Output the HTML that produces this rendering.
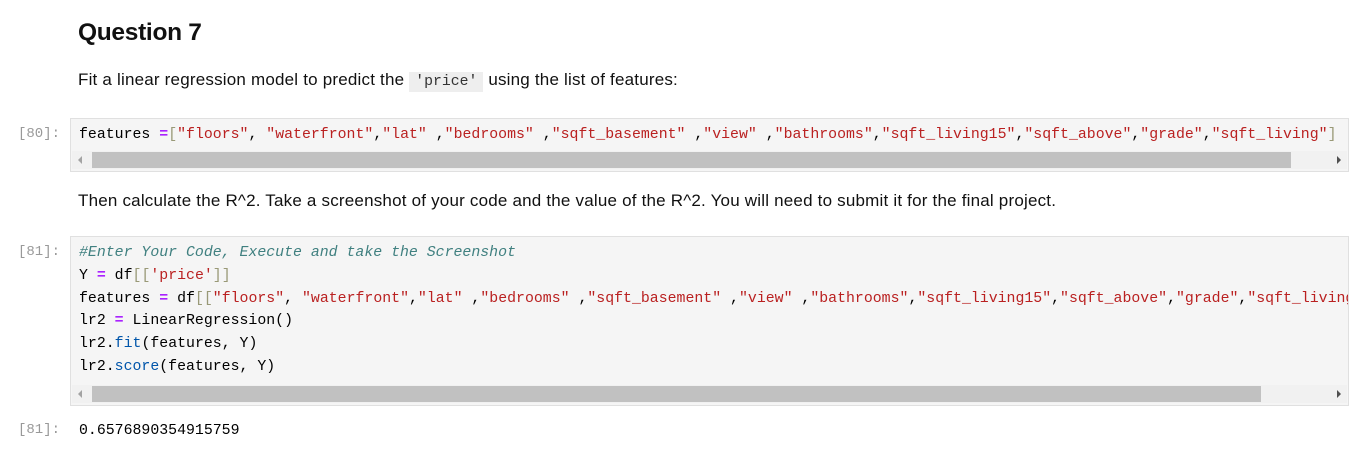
<!DOCTYPE html>
<html><head><meta charset="utf-8"><style>
body{margin:0;background:#fff;width:1357px;height:460px;overflow:hidden;font-family:"Liberation Sans",sans-serif;color:#000;position:relative}
h2{position:absolute;left:78px;top:19px;margin:0;font-size:24.5px;font-weight:bold;color:#111;letter-spacing:-0.3px}
.p{position:absolute;left:78px;font-size:17px;color:#111;letter-spacing:0.2px;white-space:nowrap}
.ic{background:#eee;font-family:"Liberation Mono",monospace;font-size:14.8px;padding:2px 6px;color:#333;letter-spacing:0}
.pr{position:absolute;left:18px;font-family:"Liberation Mono",monospace;font-size:14px;color:#999;white-space:nowrap}
.cell{position:absolute;left:70px;width:1277px;background:#f5f5f5;border:1px solid #e0e0e0;overflow:hidden}
.code{position:absolute;left:8px;font-family:"Liberation Mono",monospace;font-size:14.86px;line-height:22.8px;white-space:pre;color:#000}
.s{color:#ba2121}.o{color:#aa22ff;font-weight:bold}.c{color:#408080;font-style:italic}.f{color:#0055aa}.k{color:#999977}
.sb{position:absolute;left:1px;right:1px;height:18px;background:#f1f1f1}
.th{position:absolute;left:20px;top:1px;height:16px;background:#c1c1c1}
.la{position:absolute;left:6px;top:5px;width:0;height:0;border-top:4px solid transparent;border-bottom:4px solid transparent;border-right:4px solid #a3a3a3}
.ra{position:absolute;right:6px;top:5px;width:0;height:0;border-top:4px solid transparent;border-bottom:4px solid transparent;border-left:4px solid #505050}
</style></head><body>
<h2>Question 7</h2>
<div class="p" style="top:70px">Fit a linear regression model to predict the <span class="ic">'price'</span> using the list of features:</div>
<div class="pr" style="top:126px">[80]:</div>
<div class="cell" style="top:118px;height:52px">
<div class="code" style="top:5px">features <span class="o">=</span><span class="k">[</span><span class="s">"floors"</span>, <span class="s">"waterfront"</span>,<span class="s">"lat"</span> ,<span class="s">"bedrooms"</span> ,<span class="s">"sqft_basement"</span> ,<span class="s">"view"</span> ,<span class="s">"bathrooms"</span>,<span class="s">"sqft_living15"</span>,<span class="s">"sqft_above"</span>,<span class="s">"grade"</span>,<span class="s">"sqft_living"</span><span class="k">]</span></div>
<div class="sb" style="top:32px"><div class="la"></div><div class="th" style="width:1199px"></div><div class="ra"></div></div>
</div>
<div class="p" style="top:191px">Then calculate the R^2. Take a screenshot of your code and the value of the R^2. You will need to submit it for the final project.</div>
<div class="pr" style="top:244px">[81]:</div>
<div class="cell" style="top:236px;height:168px">
<div class="code" style="top:5px"><span class="c">#Enter Your Code, Execute and take the Screenshot</span>
Y <span class="o">=</span> df<span class="k">[[</span><span class="s">'price'</span><span class="k">]]</span>
features <span class="o">=</span> df<span class="k">[[</span><span class="s">"floors"</span>, <span class="s">"waterfront"</span>,<span class="s">"lat"</span> ,<span class="s">"bedrooms"</span> ,<span class="s">"sqft_basement"</span> ,<span class="s">"view"</span> ,<span class="s">"bathrooms"</span>,<span class="s">"sqft_living15"</span>,<span class="s">"sqft_above"</span>,<span class="s">"grade"</span>,<span class="s">"sqft_living"</span><span class="k">]]</span>
lr2 <span class="o">=</span> LinearRegression()
lr2.<span class="f">fit</span>(features, Y)
lr2.<span class="f">score</span>(features, Y)</div>
<div class="sb" style="top:148px"><div class="la"></div><div class="th" style="width:1169px"></div><div class="ra"></div></div>
</div>
<div class="pr" style="top:422px">[81]:</div>
<div class="code" style="left:79px;top:420px">0.6576890354915759</div>
</body></html>
